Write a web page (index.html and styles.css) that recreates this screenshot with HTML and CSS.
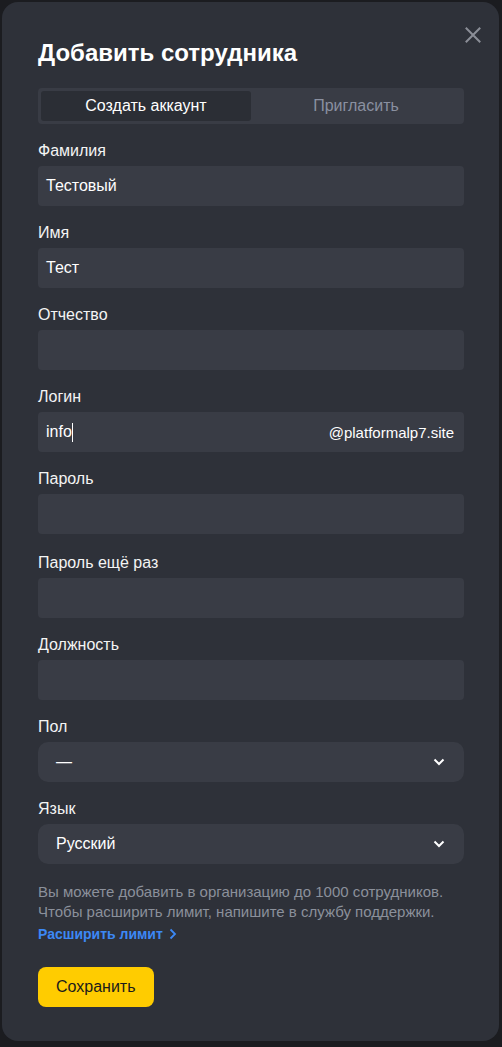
FILE: index.html
```html
<!DOCTYPE html>
<html lang="ru">
<head>
<meta charset="utf-8">
<title>Добавить сотрудника</title>
<link rel="stylesheet" href="styles.css">
</head>
<body>
<div class="modal">
  <button class="close" aria-label="Закрыть">
    <svg width="16" height="16" viewBox="0 0 16 16"><path d="M1.5 1.5L14.5 14.5M14.5 1.5L1.5 14.5" stroke="#8b8e97" stroke-width="2" stroke-linecap="square"/></svg>
  </button>
  <h1 class="title">Добавить сотрудника</h1>
  <div class="tabs">
    <div class="tab tab-active">Создать аккаунт</div>
    <div class="tab">Пригласить</div>
  </div>
  <div class="form">
    <div class="field">
      <div class="label">Фамилия</div>
      <div class="input">Тестовый</div>
    </div>
    <div class="field">
      <div class="label">Имя</div>
      <div class="input">Тест</div>
    </div>
    <div class="field">
      <div class="label">Отчество</div>
      <div class="input"></div>
    </div>
    <div class="field">
      <div class="label">Логин</div>
      <div class="input input-login"><span class="login-val">info<span class="caret"></span></span><span class="domain">@platformalp7.site</span></div>
    </div>
    <div class="field field-pass">
      <div class="label">Пароль</div>
      <div class="input"></div>
    </div>
    <div class="field">
      <div class="label">Пароль ещё раз</div>
      <div class="input"></div>
    </div>
    <div class="field">
      <div class="label">Должность</div>
      <div class="input"></div>
    </div>
    <div class="field">
      <div class="label">Пол</div>
      <div class="select"><span>—</span><svg class="chev" width="12" height="8" viewBox="0 0 12 8"><path d="M1.5 1.5L6 6L10.5 1.5" fill="none" stroke="#ffffff" stroke-width="2"/></svg></div>
    </div>
    <div class="field">
      <div class="label">Язык</div>
      <div class="select"><span>Русский</span><svg class="chev" width="12" height="8" viewBox="0 0 12 8"><path d="M1.5 1.5L6 6L10.5 1.5" fill="none" stroke="#ffffff" stroke-width="2"/></svg></div>
    </div>
  </div>
  <p class="note">Вы можете добавить в организацию до 1000 сотрудников.<br>Чтобы расширить лимит, напишите в службу поддержки.</p>
  <a class="link" href="#">Расширить лимит<svg width="8" height="12" viewBox="0 0 8 12"><path d="M1.5 1.5L6 6L1.5 10.5" fill="none" stroke="#3c88f5" stroke-width="1.8"/></svg></a>
  <div class="actions">
    <button class="save">Сохранить</button>
  </div>
</div>
</body>
</html>
```
FILE: styles.css
```css
html, body {
  margin: 0;
  padding: 0;
}
body {
  background: #1b1c20;
  font-family: "Liberation Sans", Arial, sans-serif;
  color: #ffffff;
  width: 502px;
  height: 1047px;
  overflow: hidden;
}
.modal {
  position: relative;
  box-sizing: border-box;
  margin: 2px 0 0 2px;
  width: 497px;
  height: 1039px;
  background: #2e3139;
  border-radius: 16px;
  padding: 36px 35px 0 36px;
}
.close {
  position: absolute;
  top: 25px;
  right: 18px;
  width: 16px;
  height: 16px;
  padding: 0;
  border: 0;
  background: none;
  display: flex;
}
.title {
  margin: 0;
  font-size: 24px;
  line-height: 30px;
  font-weight: 700;
  color: #ffffff;
}
.tabs {
  margin-top: 20px;
  height: 36px;
  background: #393c45;
  border-radius: 4px;
  padding: 3px;
  box-sizing: border-box;
  display: flex;
}
.tab {
  flex: 1;
  display: flex;
  align-items: center;
  justify-content: center;
  font-size: 16px;
  color: #8a90a0;
  border-radius: 3px;
}
.tab-active {
  background: #2b2e35;
  color: #ffffff;
}
.form {
  margin-top: 18px;
  display: flex;
  flex-direction: column;
  gap: 18px;
}
.field {
  display: flex;
  flex-direction: column;
}
.field-pass {
  margin-bottom: 2px;
}
.label {
  font-size: 16px;
  line-height: 18px;
  margin-bottom: 6px;
  color: #f4f4f4;
}
.input {
  height: 40px;
  box-sizing: border-box;
  background: #393c45;
  border-radius: 4px;
  padding: 0 10px 0 8px;
  display: flex;
  align-items: center;
  font-size: 16px;
  color: #ffffff;
}
.input-login {
  justify-content: space-between;
}
.login-val {
  display: flex;
  align-items: center;
}
.caret {
  display: inline-block;
  width: 1px;
  height: 19px;
  background: #ffffff;
}
.domain {
  font-size: 15px;
}
.select {
  height: 40px;
  box-sizing: border-box;
  background: #393c45;
  border-radius: 10px;
  padding: 0 19px 0 18px;
  display: flex;
  align-items: center;
  justify-content: space-between;
  font-size: 16px;
  color: #ffffff;
}
.note {
  margin: 18px 0 0;
  font-size: 15px;
  line-height: 20px;
  color: #8b909b;
}
.link {
  margin-top: 4px;
  display: inline-flex;
  align-items: center;
  gap: 6px;
  font-size: 14px;
  font-weight: 700;
  color: #3c88f5;
  text-decoration: none;
}
.actions {
  margin-top: 24px;
}
.save {
  height: 40px;
  padding: 0 18px;
  border: 0;
  border-radius: 8px;
  background: #ffcc00;
  color: #1b1b1b;
  font-family: "Liberation Sans", Arial, sans-serif;
  font-size: 16px;
}
```
